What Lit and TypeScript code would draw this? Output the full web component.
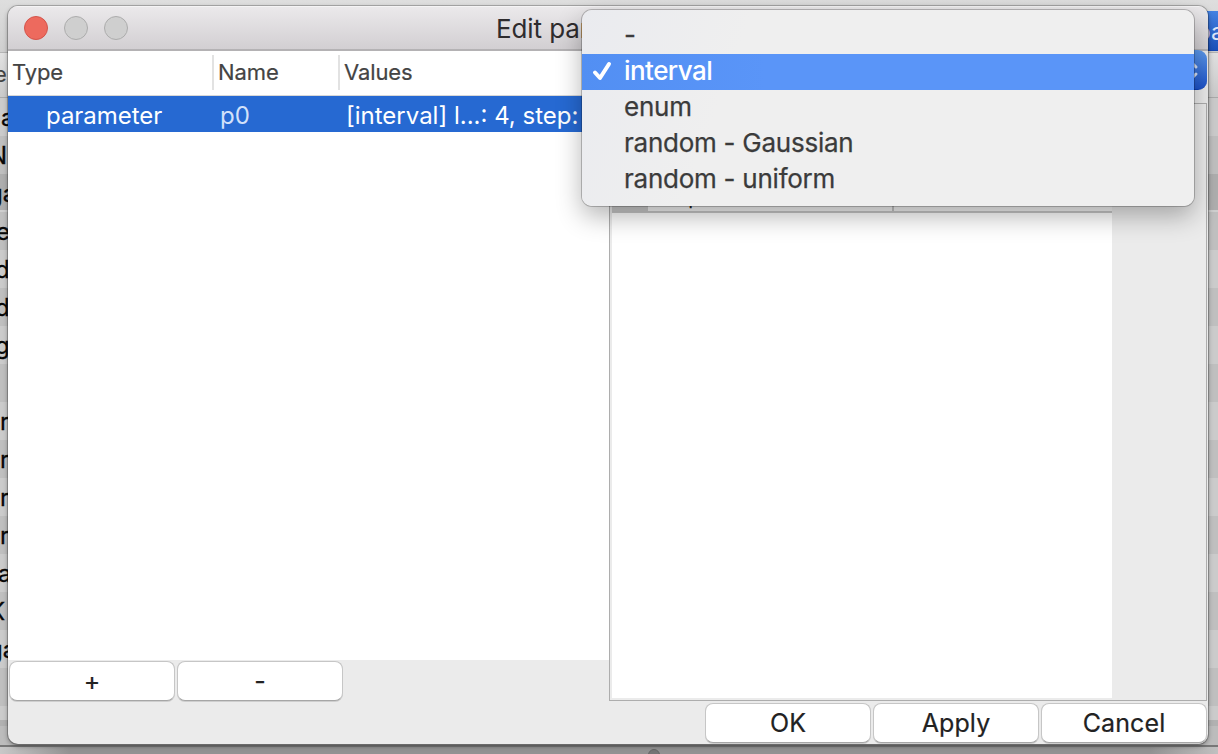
import { LitElement, html, css } from "lit";
import { customElement } from "lit/decorators.js";

interface BackRow { text: string; x: number; cls?: string; }

const BACK_ROWS: BackRow[] = [
  { text: "a", x: 1 }, { text: "N", x: -11 }, { text: "ga", x: -12, cls: "sel" },
  { text: "e", x: -4 }, { text: "d", x: -5 }, { text: "d", x: -5 }, { text: "g", x: -5 },
  { text: "", x: 0 }, { text: "r", x: 0 }, { text: "r", x: 0 }, { text: "r", x: 0 },
  { text: "r", x: 0 }, { text: "a", x: -2 }, { text: "K", x: -11 }, { text: "ga", x: -12 },
  { text: "", x: 0 },
];

const OPTIONS = [
  { label: "-", cls: "dash" }, { label: "interval", cls: "on" }, { label: "enum", cls: "enum" },
  { label: "random - Gaussian", cls: "" }, { label: "random - uniform", cls: "" },
];

@customElement("back-window")
export class BackWindow extends LitElement {
  static styles = css`
    :host { display: flex; flex-direction: column; width: 1218px; height: 754px; color: #080808;
      font: 24px/40px Inter, "Liberation Sans", sans-serif; background: #929292; overflow: hidden; }
    :host > div { flex: none; }
    .bar { height: 53px; background: linear-gradient(#dedede, #cfcfcf); display: flex; justify-content: flex-end; box-sizing: border-box; border-bottom: 1px solid #b5b5b5; }
    .pill { margin-top: 11px; height: 39px; width: 26px; background: linear-gradient(#4682e2, #1b51bb);
      color: #dce6fa; line-height: 42px; text-indent: 4px; white-space: nowrap; overflow: hidden; border-bottom: 1px solid #1548b5; }
    .head { height: 44px; border-bottom: 1px solid #aaa; background: linear-gradient(#e2e2e2, #cacaca);
      line-height: 43px; font-size: 22px; color: #444; text-indent: -6px; }
    .row { height: 38px; background: #cbcbcb; white-space: nowrap; box-sizing: border-box; -webkit-text-stroke: 0.3px #080808; }
    .row:nth-child(even) { background: #bfbfbf; }
    .row.sel { background: #aeaeae; border-bottom: 2px solid #cfcfcf; }
    .rest { height: 14px; background: #cbcbcb; }
    .line { height: 6px; background: #b1b1b1; }
    .foot { height: 19px; background: #bcbcbc; border-bottom: 2px solid #777; }
    .desk { height: 7px; overflow: hidden; background: linear-gradient(90deg, #c8c8c8, #929292 70px, #929292 1150px, #c0c0c0); display: flex; }
    .knob { width: 12px; height: 12px; box-sizing: border-box; border-radius: 50%; background: #757575; border: 1px solid #666; margin: 2px 0 0 648px; }
  `;
  render() {
    return html`
      <div class="bar"><div class="pill">pa</div></div>
      <div class="head">e</div>
      <div>${BACK_ROWS.map((r) => html`<div class="row ${r.cls ?? ""}" style="text-indent:${r.x}px">${r.text}</div>`)}</div>
      <div class="rest"></div><div class="line"></div><div class="foot"></div>
      <div class="desk"><div class="knob"></div></div>`;
  }
}

@customElement("edit-dialog")
export class EditDialog extends LitElement {
  static styles = css`
    :host { display: flex; flex-direction: column; width: 1200px; height: 738px; border-radius: 10px; overflow: hidden;
      background: #ebebeb; color: #222; font: 24px Inter, "Liberation Sans", sans-serif; }
    .title { height: 45px; box-sizing: border-box; flex: none; display: grid; grid-template-columns: 488px 1fr; align-items: center;
      background: linear-gradient(#ebe9eb, #d2cfd2); border-top: 1px solid #f5f4f5; border-bottom: 2px solid #b4b2b4; color: #2e2c2e; font-size: 26px; white-space: nowrap; }
    .lights { display: flex; gap: 16px; padding-left: 16px; }
    .light { width: 24px; height: 24px; box-sizing: border-box; border: 1px solid #acacac; border-radius: 50%; background: #cfcfcf; }
    .light.close { background: #ed6a5e; border-color: #d3544b; }
    .name { letter-spacing: -0.1px; padding-top: 1px; }
    .body { display: grid; grid-template-columns: 601px 1fr; height: 650px; flex: none; }
    .left { display: flex; flex-direction: column; }
    .table { background: #fff; height: 609px; }
    .heads, .line { display: grid; grid-template-columns: 204px 126px 1fr; }
    .heads { height: 45px; box-sizing: border-box; border-bottom: 1px solid #d8d8d8; padding-top: 4px; font-size: 22px; color: #444; line-height: 35px; -webkit-text-stroke: 0.2px #444; }
    .heads div { height: 35px; padding-left: 4px; letter-spacing: -0.1px; }
    .heads div + div { border-left: 2px solid #e2e2e2; padding-left: 4px; }
    .line { height: 36px; background: #2669d2; color: #fff; line-height: 39px; white-space: nowrap; letter-spacing: -0.05px; }
    .line div:nth-child(1) { padding-left: 38px; }
    .line div:nth-child(2) { padding-left: 8px; color: #d2e1fa; }
    .line div:nth-child(3) { padding-left: 8px; letter-spacing: 0; }
    .buttons { display: flex; gap: 2px; padding: 1px 1px; }
    .btn { width: 166px; height: 40px; box-sizing: border-box; background: #fff; border: 1px solid #c6c6c6; border-bottom: 1px solid #a6a6a6; box-shadow: 0 1px 0 #cecece;
      border-radius: 8px; text-align: center; font-size: 25px; line-height: 39px; letter-spacing: 0.1px; -webkit-text-stroke: 0.2px #222; }
    .right { display: flex; flex-direction: column; }
    .select { height: 40px; box-sizing: border-box; width: 600px; margin-left: -2px; margin-top: -1px; margin-bottom: 13px; border-radius: 0 9px 9px 0; background: linear-gradient(#5c99ec, #1c52ca);
      border-bottom: 1px solid #0b3fb8; display: flex; align-items: center; justify-content: flex-end; padding-right: 8px; }
    .select svg { width: 16px; height: 28px; }
    .panel { width: 598px; height: 598px; box-sizing: border-box; border: 1px solid #adadad; padding: 2px 1px 0 2px; }
    .grid { width: 500px; height: 592px; background: #fff; }
    .gridhead { height: 107px; box-sizing: border-box; border-bottom: 2px solid #c6c6c6; display: grid; grid-template-columns: 36px 246px 1fr; background: #f4f4f4; }
    .corner { background: #cacaca; }
    .cell { display: flex; align-items: flex-end; border-right: 2px solid #c4c4c4; padding: 0 0 3px 21px; line-height: 24px; font-size: 22px; }
    .footer { flex: 1; display: flex; gap: 2px; justify-content: flex-end; padding: 2px 1px 0 0; }
  `;
  render() {
    return html`
      <div class="title"><div class="lights"><span class="light close"></span><span class="light"></span><span class="light"></span></div><div class="name">Edit parameter</div></div>
      <div class="body">
        <div class="left">
          <div class="table">
            <div class="heads"><div>Type</div><div>Name</div><div>Values</div></div>
            <div class="line"><div>parameter</div><div>p0</div><div>[interval] l...: 4, step:</div></div>
          </div>
          <div class="buttons"><div class="btn">+</div><div class="btn">-</div></div>
        </div>
        <div class="right">
          <div class="select"><svg viewBox="0 0 16 28" fill="none" stroke="#d6e2f8" stroke-width="3" stroke-linecap="round" stroke-linejoin="round"><path d="M3 11l5-5 5 5M3 18l5 5 5-5"/></svg></div>
          <div class="panel"><div class="grid"><div class="gridhead"><div class="corner"></div><div class="cell">Input</div></div></div></div>
        </div>
      </div>
      <div class="footer"><div class="btn">OK</div><div class="btn">Apply</div><div class="btn">Cancel</div></div>`;
  }
}

@customElement("option-menu")
export class OptionMenu extends LitElement {
  static styles = css`
    :host { display: block; width: 612px; height: 196px; box-sizing: border-box; padding-top: 8px; border-radius: 10px; overflow: hidden;
      background: linear-gradient(110deg, #eaebef, #efefef 25%); color: #3b3b3b; font: 26px/33px Inter, "Liberation Sans", sans-serif; }
    .opt { height: 36px; display: grid; grid-template-columns: 42px 1fr; letter-spacing: -0.25px; white-space: nowrap; -webkit-text-stroke: 0.25px currentColor; }
    .opt.on { background: linear-gradient(90deg, #528ff3, #5a95f8 30%); color: #fff; font-weight: 500; letter-spacing: -0.55px; -webkit-text-stroke: 0; }
    svg { width: 22px; height: 24px; margin: 5px 0 0 9px; }
  `;
  render() {
    return OPTIONS.map((o) => html`<div class="opt ${o.cls}"><span>${o.cls === "on"
      ? html`<svg viewBox="0 0 22 24" fill="none" stroke="#fff" stroke-width="4" stroke-linecap="round" stroke-linejoin="round"><path d="M4 13.5l5 5.5L18 5"/></svg>` : ""}</span><span>${o.label}</span></div>`);
  }
}

@customElement("app-root")
export class AppRoot extends LitElement {
  static styles = css`
    :host { display: block; position: relative; width: 1218px; height: 754px; overflow: hidden; }
    edit-dialog { position: absolute; left: 8px; top: 6px; box-shadow: 0 0 0 1px rgba(0,0,0,.22), 0 2px 5px rgba(0,0,0,.38); }
    option-menu { position: absolute; left: 582px; top: 10px; box-shadow: 0 0 0 1px rgba(0,0,0,.22), 0 10px 26px rgba(0,0,0,.3); }
  `;
  render() {
    return html`<back-window></back-window><edit-dialog></edit-dialog><option-menu></option-menu>`;
  }
}
